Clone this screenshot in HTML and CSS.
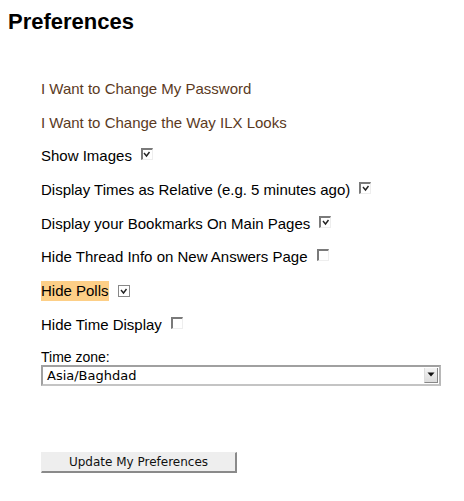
FILE: index.html
```html
<!DOCTYPE html>
<html>
<head>
<meta charset="utf-8">
<link rel="stylesheet" href="styles.css">
</head>
<body>
<h1 class="title">Preferences</h1>
<div class="prefs">
  <p class="row"><a class="link" href="#">I Want to Change My Password</a></p>
  <p class="row"><a class="link" href="#">I Want to Change the Way ILX Looks</a></p>
  <p class="row"><span class="label">Show Images</span><span class="cb"><svg width="8" height="7" viewBox="0 0 8 7"><path d="M1 2 L3.5 5 L6.5 1" fill="none" stroke="#222" stroke-width="1.4"/></svg></span></p>
  <p class="row"><span class="label">Display Times as Relative (e.g. 5 minutes ago)</span><span class="cb"><svg width="8" height="7" viewBox="0 0 8 7"><path d="M1 2 L3.5 5 L6.5 1" fill="none" stroke="#222" stroke-width="1.4"/></svg></span></p>
  <p class="row"><span class="label">Display your Bookmarks On Main Pages</span><span class="cb"><svg width="8" height="7" viewBox="0 0 8 7"><path d="M1 2 L3.5 5 L6.5 1" fill="none" stroke="#222" stroke-width="1.4"/></svg></span></p>
  <p class="row"><span class="label">Hide Thread Info on New Answers Page</span><span class="cb"></span></p>
  <p class="row"><span class="label hl">Hide Polls</span><span class="cb cb-focus"><svg width="8" height="7" viewBox="0 0 8 7"><path d="M1 2 L3.5 5 L6.5 1" fill="none" stroke="#222" stroke-width="1.4"/></svg></span></p>
  <p class="row"><span class="label">Hide Time Display</span><span class="cb"></span></p>
  <div class="tz">
    <div class="tz-label">Time zone:</div>
    <div class="select"><span class="select-text">Asia/Baghdad</span><span class="select-btn"><svg width="8" height="5" viewBox="0 0 8 5"><path d="M0.5 0.5 H7.5 L4 4.5 Z" fill="#111"/></svg></span></div>
  </div>
  <div class="actions"><button class="btn" type="button">Update My Preferences</button></div>
</div>
</body>
</html>
```
FILE: styles.css
```css
html, body {
  margin: 0;
  padding: 0;
  background: #fff;
}
body {
  padding: 8px;
  font-family: "Liberation Sans", Arial, sans-serif;
  color: #000;
}
.title {
  margin: 0;
  padding-top: 1px;
  font-size: 22px;
  font-weight: bold;
  line-height: 25px;
}
.prefs {
  padding-left: 33px;
  padding-top: 45px;
}
.row {
  margin: 0 0 13.7px 0;
  font-size: 15px;
  line-height: 20px;
  display: flex;
  align-items: center;
}
.link {
  color: #5b3a1e;
  text-decoration: none;
}
.label {
  display: inline-block;
}
.hl {
  background: #fdcf87;
}
.cb {
  display: inline-flex;
  align-items: flex-start;
  justify-content: center;
  box-sizing: border-box;
  width: 12px;
  height: 12px;
  margin-left: 9px;
  margin-top: -4px;
  border-top: 2px solid #7a7a7a;
  border-left: 2px solid #7a7a7a;
  border-right: 1px solid #eee;
  border-bottom: 1px solid #eee;
  padding-top: 1px;
  background: #fff;
}
.cb-focus {
  border: 1px solid #888;
  width: 12px;
  height: 12px;
  margin-top: 0;
  margin-left: 9px;
  align-items: center;
  padding-top: 0;
}
.tz {
  margin-top: 1px;
}
.tz-label {
  font-size: 14px;
  line-height: 16px;
}
.select {
  display: flex;
  align-items: center;
  box-sizing: border-box;
  width: 400px;
  height: 21px;
  margin-top: 0;
  border: 2px solid #a0a0a0;
  border-right-color: #b8b8b8;
  border-bottom-color: #c4c4c4;
  background: #fff;
  font-family: "DejaVu Sans", sans-serif;
  font-size: 13px;
}
.select-text {
  flex: 1;
  padding-left: 4px;
}
.select-btn {
  display: flex;
  align-items: center;
  justify-content: center;
  width: 14px;
  height: 15px;
  margin-right: 1px;
  background: linear-gradient(#f4f4f4, #dcdcdc);
  border-left: 1px solid #ddd;
  border-bottom: 1px solid #888;
  border-right: 1px solid #888;
  box-sizing: border-box;
}
.actions {
  padding-top: 66px;
}
.btn {
  box-sizing: border-box;
  width: 196px;
  height: 21px;
  padding: 0;
  margin: 0;
  font-family: "DejaVu Sans", sans-serif;
  font-size: 12px;
  color: #111;
  background: #eeeeee;
  border: 1px solid #eee;
  border-right: 2px solid #8a8a8a;
  border-bottom: 2px solid #8a8a8a;
  border-radius: 0;
}
```
